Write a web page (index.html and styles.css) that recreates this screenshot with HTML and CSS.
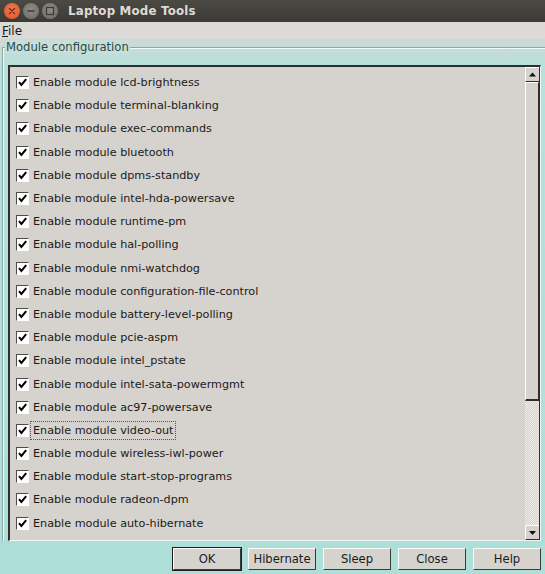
FILE: index.html
```html
<!DOCTYPE html>
<html>
<head>
<meta charset="utf-8">
<title>Laptop Mode Tools</title>
<link rel="stylesheet" href="styles.css">
</head>
<body>
<div class="window">
  <div class="titlebar">
    <span class="wbtn close"><svg width="16" height="16" viewBox="0 0 16 16"><path d="M5.5 5.5l5 5M10.5 5.5l-5 5" stroke="#7a2a14" stroke-width="1.4" stroke-linecap="round"/></svg></span>
    <span class="wbtn"><svg width="16" height="16" viewBox="0 0 16 16"><path d="M4.5 8h7" stroke="#3a3a36" stroke-width="1.5"/></svg></span>
    <span class="wbtn"><svg width="16" height="16" viewBox="0 0 16 16"><rect x="4.5" y="4.5" width="7" height="7" fill="none" stroke="#3a3a36" stroke-width="1.2"/></svg></span>
    <span class="title">Laptop Mode Tools</span>
  </div>
  <div class="menubar"><span class="menu"><u>F</u>ile</span></div>
  <div class="frame">
    <div class="legend">Module configuration</div>
    <div class="listbox">
      <div class="list">
        <div class="row"><span class="cb"></span><span class="lbl">Enable module lcd-brightness</span></div>
        <div class="row"><span class="cb"></span><span class="lbl">Enable module terminal-blanking</span></div>
        <div class="row"><span class="cb"></span><span class="lbl">Enable module exec-commands</span></div>
        <div class="row"><span class="cb"></span><span class="lbl">Enable module bluetooth</span></div>
        <div class="row"><span class="cb"></span><span class="lbl">Enable module dpms-standby</span></div>
        <div class="row"><span class="cb"></span><span class="lbl">Enable module intel-hda-powersave</span></div>
        <div class="row"><span class="cb"></span><span class="lbl">Enable module runtime-pm</span></div>
        <div class="row"><span class="cb"></span><span class="lbl">Enable module hal-polling</span></div>
        <div class="row"><span class="cb"></span><span class="lbl">Enable module nmi-watchdog</span></div>
        <div class="row"><span class="cb"></span><span class="lbl">Enable module configuration-file-control</span></div>
        <div class="row"><span class="cb"></span><span class="lbl">Enable module battery-level-polling</span></div>
        <div class="row"><span class="cb"></span><span class="lbl">Enable module pcie-aspm</span></div>
        <div class="row"><span class="cb"></span><span class="lbl">Enable module intel_pstate</span></div>
        <div class="row"><span class="cb"></span><span class="lbl">Enable module intel-sata-powermgmt</span></div>
        <div class="row"><span class="cb"></span><span class="lbl">Enable module ac97-powersave</span></div>
        <div class="row"><span class="cb"></span><span class="lbl focus">Enable module video-out</span></div>
        <div class="row"><span class="cb"></span><span class="lbl">Enable module wireless-iwl-power</span></div>
        <div class="row"><span class="cb"></span><span class="lbl">Enable module start-stop-programs</span></div>
        <div class="row"><span class="cb"></span><span class="lbl">Enable module radeon-dpm</span></div>
        <div class="row"><span class="cb"></span><span class="lbl">Enable module auto-hibernate</span></div>
      </div>
      <div class="scrollbar">
        <div class="arrow"><svg width="13" height="13" viewBox="0 0 13 13"><path d="M3 8.5h7L6.5 4.5z" fill="#111"/></svg></div>
        <div class="thumb"></div>
        <div class="trough"></div>
        <div class="arrow"><svg width="13" height="13" viewBox="0 0 13 13"><path d="M3 5h7L6.5 9z" fill="#111"/></svg></div>
      </div>
    </div>
  </div>
  <div class="buttons">
    <button class="btn default">OK</button>
    <button class="btn">Hibernate</button>
    <button class="btn">Sleep</button>
    <button class="btn">Close</button>
    <button class="btn">Help</button>
  </div>
</div>
</body>
</html>
```
FILE: styles.css
```css
html, body {
  margin: 0;
  padding: 0;
}
body {
  width: 545px;
  height: 574px;
  overflow: hidden;
  font-family: "DejaVu Sans", "Liberation Sans", sans-serif;
  font-size: 11.2px;
  color: #1a1a1a;
}
.window {
  width: 545px;
  height: 574px;
  display: flex;
  flex-direction: column;
  background: linear-gradient(to bottom, #cfd9d6 38px, #b4e2dc 70px, #acdfd8 100%);
}
.titlebar {
  height: 22px;
  flex: none;
  display: flex;
  align-items: center;
  padding-left: 4px;
  gap: 3px;
  background: linear-gradient(to bottom, #4a4944, #3b3a36);
}
.wbtn {
  width: 16px;
  height: 16px;
  border-radius: 50%;
  background: radial-gradient(circle at 50% 40%, #8d8c87, #6a6964);
  display: flex;
}
.wbtn.close {
  background: radial-gradient(circle at 50% 40%, #f27a52, #e05227);
}
.title {
  margin-left: 7px;
  color: #dfdbd2;
  font-weight: bold;
  font-size: 11.8px;
  letter-spacing: 0.2px;
}
.menubar {
  height: 17px;
  flex: none;
  background: #dcdad6;
  display: flex;
  align-items: center;
  padding-left: 2px;
  font-size: 12px;
}
.menu u {
  text-decoration: underline;
}
.frame {
  position: relative;
  margin: 8px 0 0 2px;
  border-top: 1px solid #8fa8a4;
  border-left: 1px solid #8fa8a4;
  box-shadow: inset 1px 1px 0 #f0fbf9;
  padding: 17px 4px 0 5px;
  flex: none;
}
.legend {
  position: absolute;
  top: -8px;
  left: 2px;
  padding: 0 1px;
  background: #c6dfdb;
  color: #2b4a48;
  line-height: 14px;
  font-size: 11.6px;
}
.listbox {
  height: 473px;
  display: flex;
  border-top: 2px solid #2e2e2c;
  border-left: 2px solid #2e2e2c;
  border-right: 1px solid #f4f4f2;
  border-bottom: 1px solid #f4f4f2;
  background: #d6d3ce;
}
.list {
  flex: 1;
  padding: 4px 0 0 5px;
}
.row {
  height: 23.2px;
  display: flex;
  align-items: center;
}
.cb {
  width: 11px;
  height: 11px;
  margin-left: 1px;
  border-top: 1px solid #4c4c4a;
  border-left: 1px solid #4c4c4a;
  border-right: 1px solid #fff;
  border-bottom: 1px solid #fff;
  background: #fff url("data:image/svg+xml;utf8,<svg xmlns='http://www.w3.org/2000/svg' width='11' height='11'><path d='M2 5.2l2.4 2.8L9.2 2.2' fill='none' stroke='%23000' stroke-width='2'/></svg>") center/11px no-repeat;
}
.lbl {
  margin-left: 1px;
  padding: 1px 2px;
  line-height: 15px;
  border: 1px solid transparent;
}
.focus {
  border: 1px dotted #555;
}
.scrollbar {
  width: 14px;
  display: flex;
  flex-direction: column;
  border-right: 1px solid #2e2e2c;
}
.arrow {
  height: 13px;
  flex: none;
  background: #d6d3ce;
  border-top: 1px solid #fff;
  border-left: 1px solid #fff;
  border-bottom: 1px solid #2e2e2c;
  display: flex;
}
.thumb {
  height: 316px;
  flex: none;
  background: #d6d3ce;
  border-left: 1px solid #fff;
  border-top: 1px solid #fff;
  border-bottom: 2px solid #2e2e2c;
  border-right: 1px solid #2e2e2c;
}
.trough {
  flex: 1;
  background-color: #e4e2de;
  background-image: repeating-conic-gradient(#d2d0cc 0 25%, #f0efec 0 50%);
  background-size: 2px 2px;
}
.buttons {
  display: flex;
  justify-content: flex-end;
  gap: 7px;
  padding: 7px 4px 0 0;
}
.btn {
  width: 68px;
  height: 22px;
  padding: 0;
  font-family: "DejaVu Sans", "Liberation Sans", sans-serif;
  font-size: 11.6px;
  color: #1a1a1a;
  background: #d6d3ce;
  border-top: 1px solid #fbfbfa;
  border-left: 1px solid #fbfbfa;
  border-right: 1px solid #3a3a38;
  border-bottom: 1px solid #3a3a38;
}
.btn.default {
  outline: 1px solid #1e1e1e;
}
```
